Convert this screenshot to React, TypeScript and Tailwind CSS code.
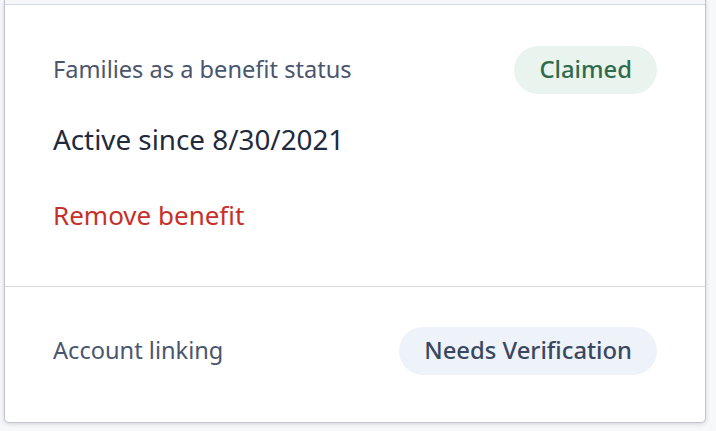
export default function App() {
  return (
    <div className="w-[716px] h-[431px] bg-[#f7f8fa] overflow-hidden" style={{ fontFamily: '"Noto Sans", "Open Sans", sans-serif' }}>
      <div className="ml-[4px] w-[702px] bg-white border-x border-b border-[#bfc4cd] rounded-b-[5px] shadow-[0_1px_4px_rgba(60,70,90,0.2)]">
        <div className="h-[5px] bg-[#f6f7f9] border-b border-[#d3d7de]" />
        <div className="px-12 pt-[41px] pb-[54px] border-b border-[#d3d7de]">
          <div className="flex items-center justify-between h-12">
            <span className="text-[23.6px] text-[#4a566e]">Families as a benefit status</span>
            <span className="h-12 px-[25px] flex items-center rounded-full bg-[#e9f4ee] text-[#2f6b4b] text-[23.8px] font-medium">Claimed</span>
          </div>
          <div className="mt-[27px] h-9 leading-9 text-[27.8px] text-[#1f2a3d]">Active since 8/30/2021</div>
          <div className="mt-[41px] h-[34px] leading-[34px] text-[26px] text-[#c7302a]">Remove benefit</div>
        </div>
        <div className="px-12 pt-[40px] pb-[47px]">
          <div className="flex items-center justify-between h-12">
            <span className="text-[23.6px] text-[#4a566e]">Account linking</span>
            <span className="h-12 px-[25px] flex items-center rounded-full bg-[#edf3f9] text-[#3a4760] text-[23.8px] font-medium">Needs Verification</span>
          </div>
        </div>
      </div>
    </div>
  );
}
